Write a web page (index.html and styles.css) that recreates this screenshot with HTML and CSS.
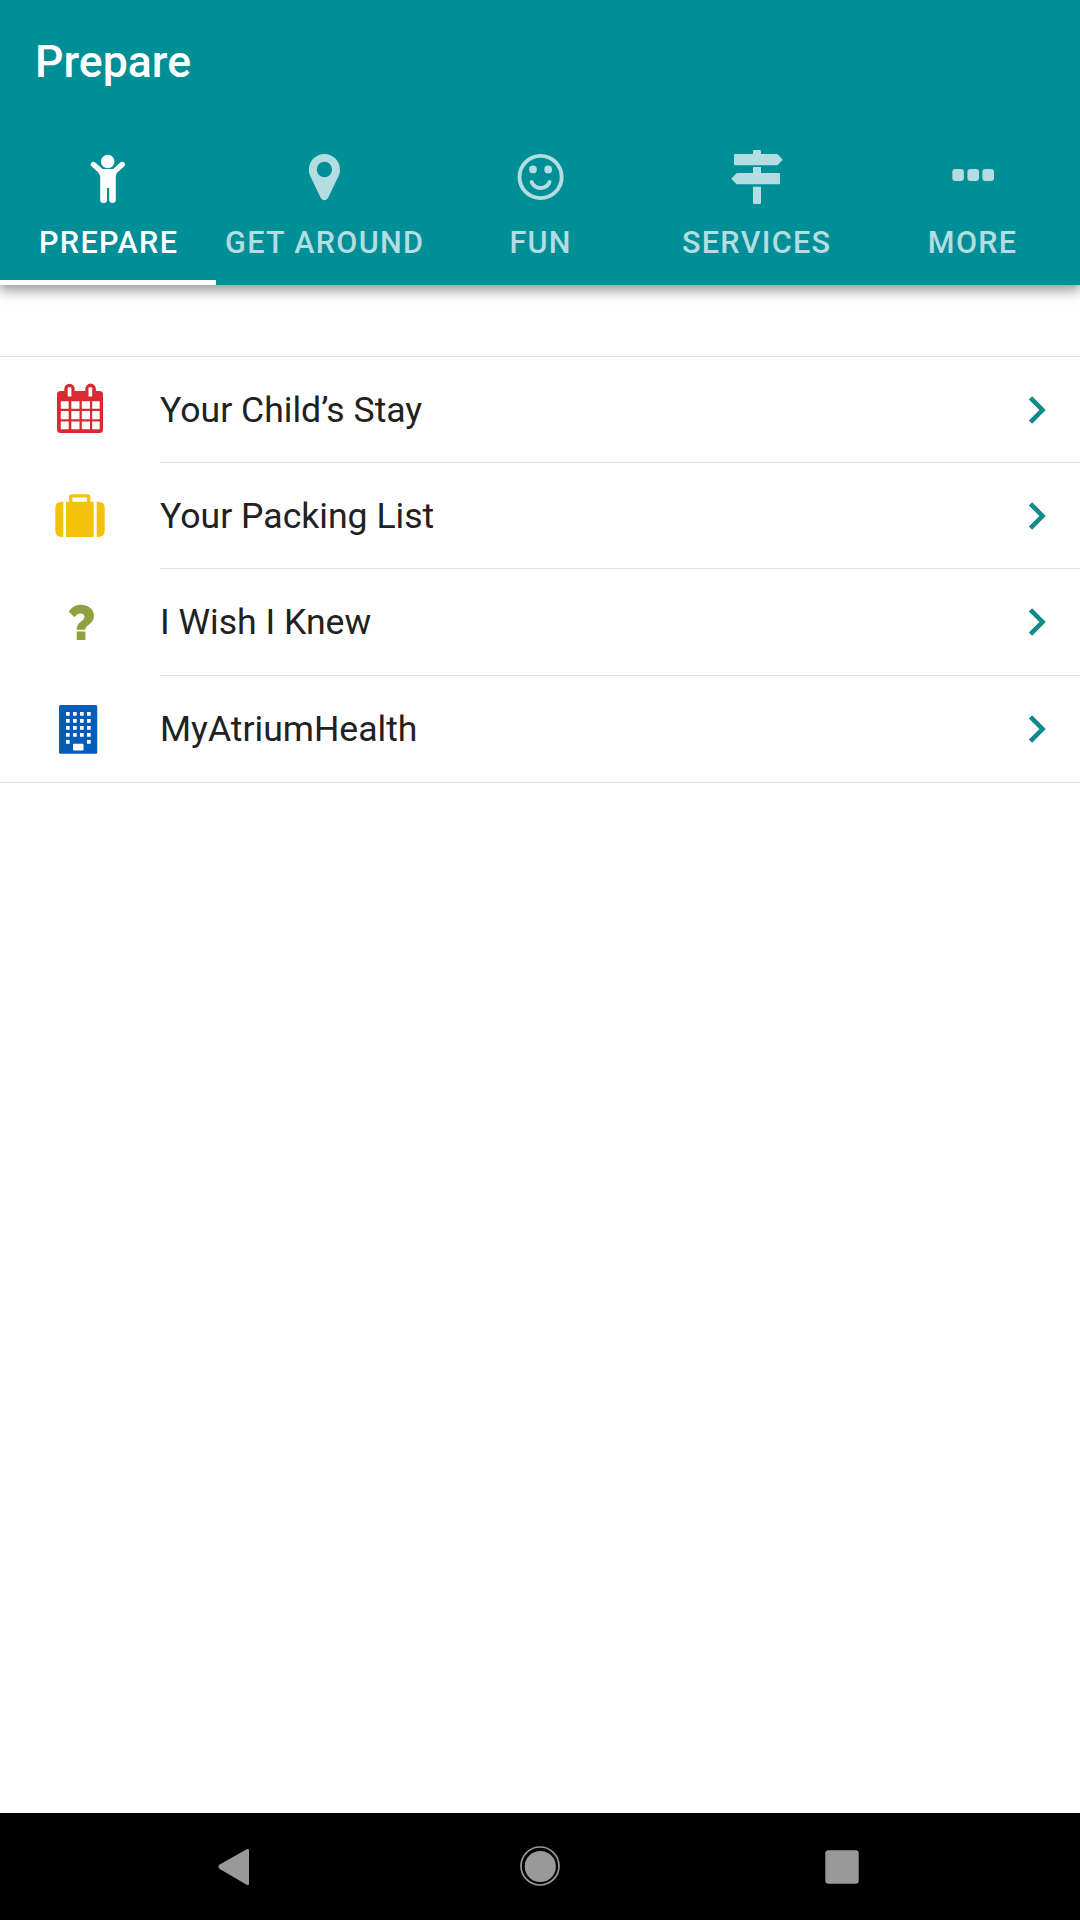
FILE: index.html
```html
<!DOCTYPE html>
<html lang="en">
<head>
    <meta charset="UTF-8">
    <meta name="viewport" content="width=device-width, initial-scale=1.0">
    <title>Prepare</title>
    <link rel="stylesheet" href="styles.css">
</head>
<body>

<header class="header">
    <h1>Prepare</h1>
    <nav class="tabs">
        <a class="tab active">
            <svg viewBox="0 0 60 60">
                <circle cx="29.7" cy="13.5" r="6.8"/>
                <path d="M15.5 16.5L25 25M44.2 16.5L34.7 25" fill="none" stroke="currentColor" stroke-width="5.4" stroke-linecap="round"/>
                <path d="M24 21h12l3 3l-1.2 4V51.7a3.2 3.2 0 0 1-6.6 0V40h-2.2V51.7a3.3 3.3 0 0 1-6.8 0V28L20 24z"/>
            </svg>
            <span>PREPARE</span>
        </a>
        <a class="tab">
            <svg viewBox="0 0 60 60">
                <path fill-rule="evenodd" d="M30.4 6C39 6 46 12.900 46 21.500C46 24 45.600 26 44.600 28L34.300 49.600C32.700 53 28.100 53 26.500 49.600L16.200 28C15.200 26 14.900 24 14.900 21.500C14.900 12.900 21.800 6 30.400 6zM30.400 13.800a7.700 7.700 0 1 0 0 15.400a7.700 7.700 0 1 0 0-15.400z"/>
            </svg>
            <span>GET AROUND</span>
        </a>
        <a class="tab">
            <svg viewBox="0 0 60 60">
                <circle cx="30.6" cy="29" r="21.1" fill="none" stroke="currentColor" stroke-width="3.9"/>
                <circle cx="23" cy="21.4" r="3.9"/>
                <circle cx="38.2" cy="21.4" r="3.9"/>
                <path d="M21.600 34C25 42 36.200 42 39.600 34" fill="none" stroke="currentColor" stroke-width="3.900" stroke-linecap="round"/>
            </svg>
            <span>FUN</span>
        </a>
        <a class="tab">
            <svg viewBox="0 0 60 60">
                <path d="M27 6V3.200Q27 2 28.200 2H33.800Q35 2 35 3.200V6H50.500Q51.300 6 51.900 6.600L56.700 11.700L51.900 16.700Q51.300 17.300 50.500 17.300H9.200Q8 17.300 8 16.100V7.200Q8 6 9.200 6z"/>
                <path d="M27 19H35V25H52.800Q54 25 54 26.200V35.100Q54 36.300 52.800 36.300H11.500Q10.700 36.300 10.100 35.700L5.300 30.700L10.100 25.600Q10.700 25 11.500 25H27z"/>
                <path d="M27 38.700H35V54.800Q35 56 33.800 56H28.200Q27 56 27 54.800z"/>
            </svg>
            <span>SERVICES</span>
        </a>
        <a class="tab">
            <svg viewBox="0 0 60 60">
                <rect x="10.3" y="21" width="11.6" height="12" rx="3"/>
                <rect x="25.4" y="21" width="11.6" height="12" rx="3"/>
                <rect x="40.4" y="21" width="11.6" height="12" rx="3"/>
            </svg>
            <span>MORE</span>
        </a>
    </nav>
</header>

<main class="content">
    <ul class="list">
        <li class="item">
            <svg class="icon red" viewBox="0 0 60 60">
                <path fill-rule="evenodd" d="M10.500 12H14.300V9.900a5.200 5.200 0 0 1 10.400 0V12H35.300V9.900a5.300 5.300 0 0 1 10.600 0V12H49.500Q53 12 53 15.500V50.500Q53 54 49.500 54H10.500Q7 54 7 50.500V15.500Q7 12 10.500 12z
                    M17.700 9V17.500H21.400V9Q21.400 8.300 20.700 8.300H18.400Q17.700 8.300 17.700 9z
                    M38.500 9V17.500H42.200V9Q42.200 8.300 41.500 8.300H39.200Q38.500 8.300 38.500 9z
                    M10.800 22.200h7.900v7.600h-7.900zM21.300 22.200h8.200v7.600h-8.200zM31.800 22.200h8.200v7.600h-8.200zM42.200 22.200h7.500v7.600h-7.500z
                    M10.800 32h7.900v8.300h-7.900zM21.300 32h8.200v8.300h-8.200zM31.800 32h8.200v8.300h-8.200zM42.200 32h7.500v8.300h-7.500z
                    M10.800 42.500h7.900v7.800h-7.900zM21.300 42.500h8.200v7.800h-8.200zM31.800 42.500h8.200v7.800h-8.200zM42.200 42.500h7.500v7.800h-7.500z"/>
            </svg>
            <div class="row"><span>Your Child’s Stay</span><svg class="chevron" viewBox="0 0 20 30"><path d="M3.500 2.800L15.500 15L3.500 27.200"/></svg></div>
        </li>
        <li class="item">
            <svg class="icon yellow" viewBox="0 0 60 60">
                <path d="M13.300 16.700V52H11.500Q5.300 52 5.300 45.800V22.900Q5.300 16.700 11.500 16.700zM46.700 16.700V52H48.500Q54.700 52 54.700 45.800V22.900Q54.700 16.700 48.500 16.700z"/>
                <path fill-rule="evenodd" d="M19 16.700V12Q19 9.300 21.700 9.300H37.700Q40.400 9.300 40.400 12V16.700H43.700V52H16V16.700zM22.400 12.600V16.700H37V12.600z"/>
            </svg>
            <div class="row"><span>Your Packing List</span><svg class="chevron" viewBox="0 0 20 30"><path d="M3.500 2.800L15.500 15L3.500 27.200"/></svg></div>
        </li>
        <li class="item">
            <svg class="icon green" viewBox="0 0 60 60">
                <path d="M18.700 20.800C21.500 16.300 25.500 13.700 31 13.700C38 13.700 44 18 44 24.700C44 33 35.300 33.500 35.300 38.700H26.600C26.600 31 34.500 30.200 34.500 25.600C34.500 23.700 32.800 22.500 30.300 22.500C27.800 22.500 26.300 24 24.500 26.200z"/>
                <rect x="26.7" y="40.6" width="8.700" height="8.400" rx="0.6"/>
            </svg>
            <div class="row"><span>I Wish I Knew</span><svg class="chevron" viewBox="0 0 20 30"><path d="M3.500 2.800L15.500 15L3.500 27.200"/></svg></div>
        </li>
        <li class="item">
            <svg class="icon blue" viewBox="0 0 60 60">
                <rect x="9" y="7" width="38.200" height="48.700" rx="1.500"/>
                <path class="windows" d="M16 15.900h26M16 22.900h26M16 29.900h26M16 36.900h26"/>
                <path fill="#fff" d="M16 42.100h3.700v3.600h-3.700zM37 42.100h3.700v3.600h-3.700zM24 45.700h8.500q1 0 1 1v4.700q0 1-1 1h-8.500q-1 0-1-1v-4.700q0-1 1-1z"/>
            </svg>
            <div class="row"><span>MyAtriumHealth</span><svg class="chevron" viewBox="0 0 20 30"><path d="M3.500 2.800L15.500 15L3.500 27.200"/></svg></div>
        </li>
    </ul>
</main>

<footer class="navbar">
    <svg viewBox="0 0 60 60"><path d="M11.300 28.800Q9.500 30.500 11.300 32.700L38.700 48.700Q41 49.700 41 47.700V14.300Q41 12.300 38.700 13.300z"/></svg>
    <svg viewBox="0 0 60 60">
        <circle cx="30" cy="30" r="19" fill="none" stroke="#999" stroke-width="1.700"/>
        <circle cx="30.3" cy="30.500" r="15.600"/>
    </svg>
    <svg viewBox="0 0 60 60"><rect x="13.300" y="14.300" width="33.400" height="33.400" rx="3"/></svg>
</footer>

</body>
</html>
```
FILE: styles.css
```css
* {
    box-sizing: border-box;
}
body {
    margin: 0;
    height: 1920px;
    display: flex;
    flex-direction: column;
    font-family: Roboto, sans-serif;
    background: #fefefe;
    color: #212121;
}
.header {
    height: 285px;
    background: #008e97;
    color: white;
    box-shadow: 0 4px 12px 1px rgba(0, 0, 0, 0.42);
    display: flex;
    flex-direction: column;
}
h1 {
    margin: 0;
    padding: 1px 35px 0;
    height: 123px;
    line-height: 123px;
    font-size: 44.6px;
    font-weight: 500;
}
.tabs {
    flex: 1;
    display: grid;
    grid-template-columns: repeat(5, 1fr);
}
.tab {
    display: flex;
    flex-direction: column;
    align-items: center;
    padding-top: 25px;
    border-bottom: 5px solid transparent;
    color: #b3dde0;
    font-size: 30.6px;
    font-weight: 500;
    line-height: 36px;
    letter-spacing: 1.3px;
    white-space: nowrap;
}
.tab span {
    padding-left: 1.3px;
}
.tab.active {
    color: white;
    border-bottom-color: white;
}
.tab svg {
    width: 60px;
    height: 60px;
    margin-bottom: 17px;
    fill: currentColor;
}
.content {
    flex: 1;
    padding-top: 71px;
}
.list {
    margin: 0;
    padding: 0;
    list-style: none;
    border-top: 1px solid #e0e0e0;
    border-bottom: 1px solid #e0e0e0;
}
.item {
    height: 106px;
    padding-left: 50px;
    display: flex;
}
.item:nth-child(3) {
    height: 107px;
}
.icon {
    width: 60px;
    height: 60px;
    margin: 22px 50px 0 0;
}
.row {
    flex: 1;
    display: flex;
    justify-content: space-between;
    align-items: center;
    padding-right: 33px;
    border-bottom: 1px solid #e0e0e0;
    font-size: 35.6px;
}
.item:last-child .row {
    border-bottom: none;
}
.chevron {
    width: 20px;
    height: 30px;
    fill: none;
    stroke: #128a88;
    stroke-width: 4.6;
}
.red {
    fill: #d92b2f;
}
.yellow {
    fill: #f4c20a;
}
.green {
    fill: #92a13f;
}
.blue {
    fill: #045cb8;
}
.windows {
    fill: none;
    stroke: white;
    stroke-width: 3.7;
    stroke-dasharray: 3.7 3.3;
}
.navbar {
    height: 107px;
    padding-bottom: 1px;
    background: black;
    display: flex;
    justify-content: center;
    align-items: center;
    gap: 242px;
}
.navbar svg {
    width: 60px;
    height: 60px;
    fill: #999;
}
```
